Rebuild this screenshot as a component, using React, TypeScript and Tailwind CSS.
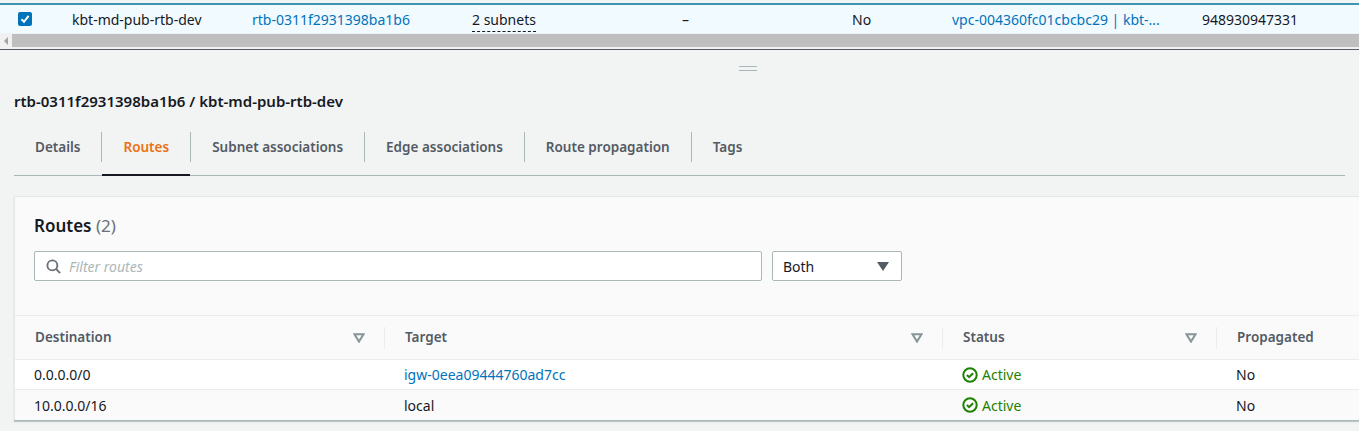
const font = "font-['Noto_Sans',sans-serif]";

const TABS = ["Details", "Routes", "Subnet associations", "Edge associations", "Route propagation", "Tags"];

const COLS = [
  { label: "Destination", width: "w-[370px]", filter: true },
  { label: "Target", width: "w-[558px]", filter: true },
  { label: "Status", width: "w-[274px]", filter: true },
  { label: "Propagated", width: "w-[142px]", filter: false },
];

const ROUTES = [
  { dest: "0.0.0.0/0", target: "igw-0eea09444760ad7cc", link: true },
  { dest: "10.0.0.0/16", target: "local", link: false },
];

function FilterIcon() {
  return (
    <svg width="12" height="10" viewBox="0 0 12 10" className="shrink-0">
      <path d="M1.5 1.2h9L6 8.6z" fill="none" stroke="#879596" strokeWidth="2" />
    </svg>
  );
}

function ActiveIcon() {
  return (
    <svg width="16" height="16" viewBox="0 0 16 16" fill="none" stroke="#1d8102" strokeWidth="2" className="shrink-0">
      <circle cx="8" cy="8" r="6.7" />
      <path d="M4.9 8l2.2 2.2 4-4" />
    </svg>
  );
}

function TopRow() {
  return (
    <div className="mt-[3px] flex h-[30px] items-center border-t-2 border-[#3f93b5] bg-[#f1faff] text-[14px] text-[#16191f]">
      <div className="flex w-[72px] pl-[18px]">
        <span className="flex h-[14px] w-[14px] items-center justify-center rounded-[2px] bg-[#0073bb]">
          <svg width="10" height="10" viewBox="0 0 10 10" fill="none" stroke="#fff" strokeWidth="2">
            <path d="M1.5 5.2l2.5 2.6 4.6-6" />
          </svg>
        </span>
      </div>
      <div className="w-[180px]">kbt-md-pub-rtb-dev</div>
      <div className="w-[220px] text-[#0073bb]">rtb-0311f2931398ba1b6</div>
      <div className="w-[210px]">
        <span className="border-b border-dashed border-[#16191f] pb-[2px]">2 subnets</span>
      </div>
      <div className="w-[170px]">–</div>
      <div className="w-[100px]">No</div>
      <div className="w-[250px] whitespace-nowrap text-[#0073bb]">vpc-004360fc01cbcbc29 | kbt-...</div>
      <div>948930947331</div>
    </div>
  );
}

function Scrollbar() {
  return (
    <div className="flex h-[15px] items-center bg-[#f1f1f1]">
      <div className="flex w-[12px] justify-center">
        <span className="h-0 w-0 border-y-[4px] border-r-[4px] border-y-transparent border-r-[#a3a3a3]" />
      </div>
      <div className="h-[13px] flex-1 bg-[#bfbfbf]" />
    </div>
  );
}

function Tabs() {
  return (
    <div className="mx-[14px] mt-[12px] flex h-[53px] border-b border-[#aab7b8] pt-[9px]">
      {TABS.map((tab, i) => {
        const active = tab === "Routes";
        return (
          <div key={tab} className="flex h-[44px] items-start">
            {i > 0 && <span className="h-[30px] w-px bg-[#aab7b8]" />}
            <div
              className={`flex h-[44px] items-start px-[21px] pt-[5px] text-[13.5px] font-semibold ${
                active ? "border-b-[2px] border-[#16191f] text-[#ec7211]" : "text-[#545b64]"
              }`}
            >
              {tab}
            </div>
          </div>
        );
      })}
    </div>
  );
}

function RoutesCard() {
  return (
    <div className="ml-[14px] mt-[20px] h-[225px] border-b-2 border-l border-t border-[#e5e8e8] border-b-[#aab7b8] bg-[#fafafa] shadow-[0_1px_1px_0_rgba(0,28,36,0.2)]">
      <div className="h-[119px] border-b border-[#eaeded] px-[19px] pt-[17px]">
        <div className="text-[17px] font-semibold leading-[24px] text-[#16191f]">
          Routes <span className="font-normal text-[#687078]">(2)</span>
        </div>
        <div className="mt-[13px] flex gap-[10px]">
          <div className="flex h-[30px] w-[728px] items-center gap-[8px] rounded-[2px] border border-[#aab7b8] bg-white pl-[11px]">
            <svg width="15" height="15" viewBox="0 0 16 16" fill="none" stroke="#687078" strokeWidth="2">
              <circle cx="6.8" cy="6.8" r="5.3" />
              <path d="M10.6 10.6l4.4 4.4" />
            </svg>
            <span className="text-[14px] italic text-[#aab7b8]">Filter routes</span>
          </div>
          <div className="flex h-[30px] w-[130px] items-center justify-between rounded-[2px] border border-[#aab7b8] bg-white pl-[10px] pr-[12px] text-[14px] text-[#16191f]">
            Both
            <span className="h-0 w-0 border-x-[6px] border-t-[9px] border-x-transparent border-t-[#545b64]" />
          </div>
        </div>
      </div>
      <div className="flex h-[44px] items-center border-b border-[#eaeded] bg-[#fafafa]">
        {COLS.map((col, i) => (
          <div key={col.label} className={`flex h-[22px] items-center justify-between pl-[20px] ${col.width} ${i < 3 ? "border-r border-[#eaeded] pr-[19px]" : ""}`}>
            <span className="text-[13.5px] font-semibold text-[#545b64]">{col.label}</span>
            {col.filter && <FilterIcon />}
          </div>
        ))}
      </div>
      {ROUTES.map((r, i) => (
        <div key={r.dest} className={`flex h-[30px] items-center text-[14px] text-[#16191f] ${i === 0 ? "border-b border-[#eaeded] bg-white" : "bg-[#fafafa]"}`}>
          <div className="w-[370px] pl-[19px]">{r.dest}</div>
          <div className={`w-[558px] pl-[19px] ${r.link ? "text-[#0073bb]" : ""}`}>{r.target}</div>
          <div className="flex w-[274px] items-center gap-[4px] pl-[19px] text-[#1d8102]">
            <ActiveIcon />
            Active
          </div>
          <div className="pl-[19px]">No</div>
        </div>
      ))}
    </div>
  );
}

export default function App() {
  return (
    <div className={`h-[431px] w-[1359px] overflow-hidden bg-[#f2f3f3] ${font}`}>
      <div className="bg-white">
        <TopRow />
        <Scrollbar />
      </div>
      <div className="h-[1px] bg-[#f2f3f3]" />
      <div className="h-[1px] bg-[#545b64]" />
      <div className="flex h-[41px] justify-center pl-[136px] pt-[16px]">
        <div className="h-[5px] w-[18px] border-y border-[#aab7b8]" />
      </div>
      <div className="pl-[14px] text-[15px] font-semibold leading-[20px] text-[#16191f]">
        rtb-0311f2931398ba1b6 / kbt-md-pub-rtb-dev
      </div>
      <Tabs />
      <RoutesCard />
    </div>
  );
}
